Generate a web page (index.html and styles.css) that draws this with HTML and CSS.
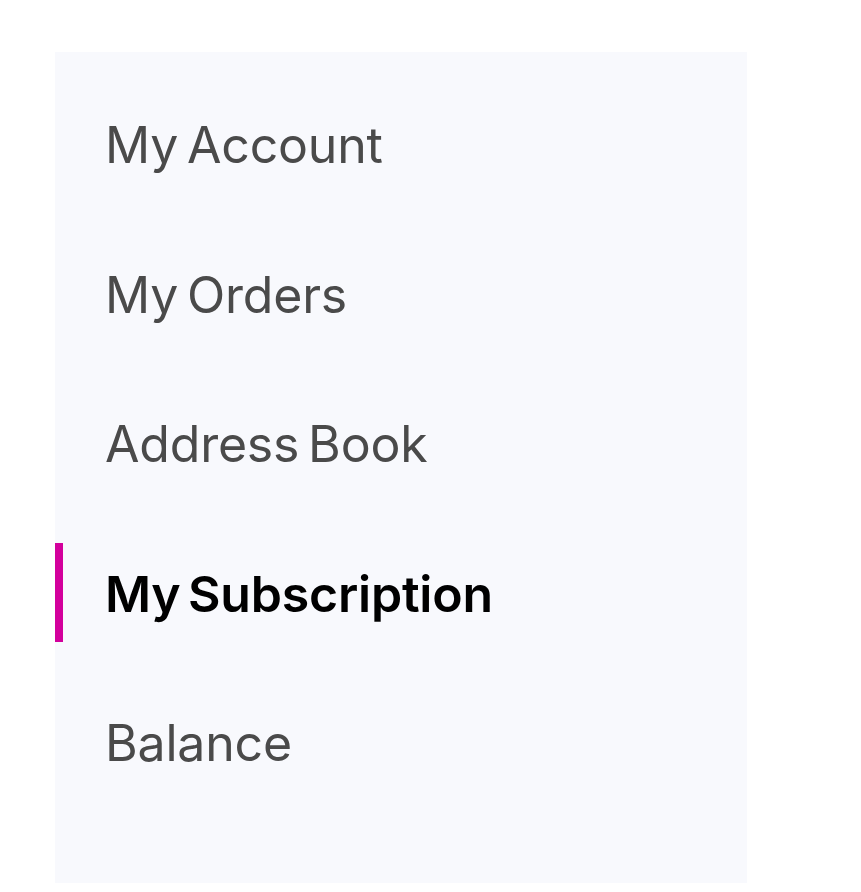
FILE: index.html
```html
<!DOCTYPE html>
<html>
<head>
<meta charset="utf-8">
<link rel="stylesheet" href="styles.css">
</head>
<body>
<nav class="sidebar">
  <a class="item">My Account</a>
  <a class="item">My Orders</a>
  <a class="item">Address Book</a>
  <a class="item active">My Subscription</a>
  <a class="item">Balance</a>
</nav>
</body>
</html>
```
FILE: styles.css
```css
html, body {
  margin: 0;
  padding: 0;
  background: #ffffff;
}
body {
  padding: 52px 0 0 55px;
  font-family: Inter, "Noto Sans", sans-serif;
}
.sidebar {
  width: 692px;
  height: 831px;
  box-sizing: border-box;
  background: #f8f9fd;
  padding-top: 42px;
  display: flex;
  flex-direction: column;
  gap: 50.5px;
}
.item {
  display: flex;
  align-items: center;
  height: 99px;
  box-sizing: border-box;
  padding-left: 42px;
  padding-top: 3px;
  border-left: 8px solid transparent;
  font-size: 50px;
  font-weight: 400;
  color: #4a4a4a;
  letter-spacing: -0.2px;
  word-spacing: -5px;
}
.item.active {
  border-left-color: #d3009c;
  color: #000000;
  font-weight: 600;
}
```
